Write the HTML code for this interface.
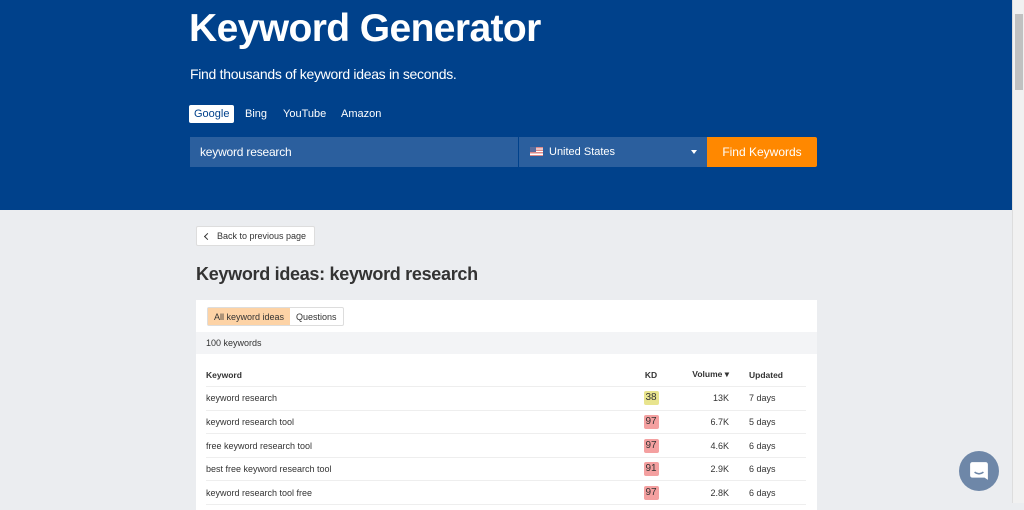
<!DOCTYPE html>
<html><head><style>
*{box-sizing:border-box;margin:0;padding:0}
body{width:1024px;height:503px;overflow:hidden;background:#ebedf0;font-family:"Liberation Sans",sans-serif;position:relative}
.hdr{position:absolute;left:0;top:0;width:1012px;height:210px;background:#00418b;color:#fff}
.sb{position:absolute;right:0;top:0;width:12px;height:503px;background:#f1f1f1;border-left:1px solid #ddd}
.sb .th{position:absolute;left:2px;top:14px;width:8px;height:76px;background:#c1c1c1}
h1{position:absolute;left:189px;top:7px;font-size:39px;font-weight:bold;letter-spacing:-0.6px}
.sub{position:absolute;left:190px;top:66px;font-size:14px;letter-spacing:-0.3px}
.tabs{position:absolute;left:189px;top:105px;font-size:11px}
.tabs span{position:absolute;top:0;padding:3px 5px;white-space:nowrap}
.tabs .on{background:#fff;color:#00418b;border-radius:2px}
.inp{position:absolute;left:190px;top:137px;width:328px;height:30px;background:#2b5f9e;font-size:12px;padding:8px 10px;letter-spacing:-0.2px}
.sel{position:absolute;left:519px;top:137px;width:188px;height:30px;background:#2b5f9e;font-size:11px;padding:9px 10px 0 30px}
.flag{position:absolute;left:11px;top:10px;width:13px;height:9px;background:repeating-linear-gradient(#d88 0 1.3px,#fff 1.3px 2.6px)}
.flag:before{content:"";position:absolute;left:0;top:0;width:6px;height:5px;background:#5a6c9e}
.car{position:absolute;right:10px;top:13px;border:3px solid transparent;border-top:4px solid #fff}
.btn{position:absolute;left:707px;top:137px;width:110px;height:30px;background:#ff8800;font-size:12px;text-align:center;line-height:30px;border-radius:0 2px 2px 0}
.back{position:absolute;left:196px;top:226px;width:119px;height:20px;background:#fff;border:1px solid #ddd;border-radius:2px;font-size:9px;color:#333;padding:4px 0 0 20px;white-space:nowrap}
.back:before{content:"";position:absolute;left:8px;top:7px;width:4px;height:4px;border-left:1.5px solid #333;border-bottom:1.5px solid #333;transform:rotate(45deg)}
h2{position:absolute;left:196px;top:264px;font-size:18px;color:#333;font-weight:bold;letter-spacing:-0.3px}
.card{position:absolute;left:196px;top:300px;width:621px;height:210px;background:#fff}
.ct{position:absolute;left:11px;top:7px;display:flex;font-size:9px;border:1px solid #ddd;border-radius:2px}
.ct span{padding:4px 6px 3px;color:#333}
.ct .on{background:#fdd3a6}
.cnt{position:absolute;left:0;top:32px;width:621px;height:22px;background:#f3f4f6;font-size:9px;color:#333;padding:6px 10px}
table{position:absolute;left:10px;top:63px;width:600px;border-collapse:collapse;font-size:9px;color:#333;table-layout:fixed}
td,th{height:23.6px;border-bottom:1px solid #eee;padding:0;vertical-align:middle}
th{font-weight:bold;text-align:left;font-size:8.5px}
.kd{text-align:center}
.v{text-align:right}
.u{padding-left:20px}
.b{display:inline-block;width:15px;height:14px;line-height:14px;border-radius:2px;background:#f4a0a0;font-size:10px;vertical-align:middle}
.y{background:#e8e48e}
.chat{position:absolute;left:959px;top:451px;width:40px;height:40px;border-radius:50%;background:#6e87a8}
.chat svg{position:absolute;left:10px;top:10px}
</style></head><body>
<div class="hdr">
<h1>Keyword Generator</h1>
<div class="sub">Find thousands of keyword ideas in seconds.</div>
<div class="tabs"><span class="on" style="left:0">Google</span><span style="left:51px">Bing</span><span style="left:89px">YouTube</span><span style="left:147px">Amazon</span></div>
<div class="inp">keyword research</div>
<div class="sel"><i class="flag"></i>United States<i class="car"></i></div>
<div class="btn">Find Keywords</div>
</div>
<div class="sb"><div class="th"></div></div>
<div class="back">Back to previous page</div>
<h2>Keyword ideas: keyword research</h2>
<div class="card">
<div class="ct"><span class="on">All keyword ideas</span><span>Questions</span></div>
<div class="cnt">100 keywords</div>
<table>
<colgroup><col style="width:430px"><col style="width:30px"><col style="width:63px"><col style="width:77px"></colgroup>
<tr><th>Keyword</th><th class="kd">KD</th><th class="v">Volume ▾</th><th class="u">Updated</th></tr>
<tr><td>keyword research</td><td class="kd"><span class="b y">38</span></td><td class="v">13K</td><td class="u">7 days</td></tr>
<tr><td>keyword research tool</td><td class="kd"><span class="b">97</span></td><td class="v">6.7K</td><td class="u">5 days</td></tr>
<tr><td>free keyword research tool</td><td class="kd"><span class="b">97</span></td><td class="v">4.6K</td><td class="u">6 days</td></tr>
<tr><td>best free keyword research tool</td><td class="kd"><span class="b">91</span></td><td class="v">2.9K</td><td class="u">6 days</td></tr>
<tr><td>keyword research tool free</td><td class="kd"><span class="b">97</span></td><td class="v">2.8K</td><td class="u">6 days</td></tr>
</table>
</div>
<div class="chat"><svg width="20" height="20" viewBox="0 0 18 18"><path d="M3 1h12a2 2 0 0 1 2 2v14l-3-2H3a2 2 0 0 1-2-2V3a2 2 0 0 1 2-2z" fill="#fff"/><path d="M5 10q4 3 8 0" stroke="#6e87a8" stroke-width="1.4" fill="none"/></svg></div>
</body></html>
